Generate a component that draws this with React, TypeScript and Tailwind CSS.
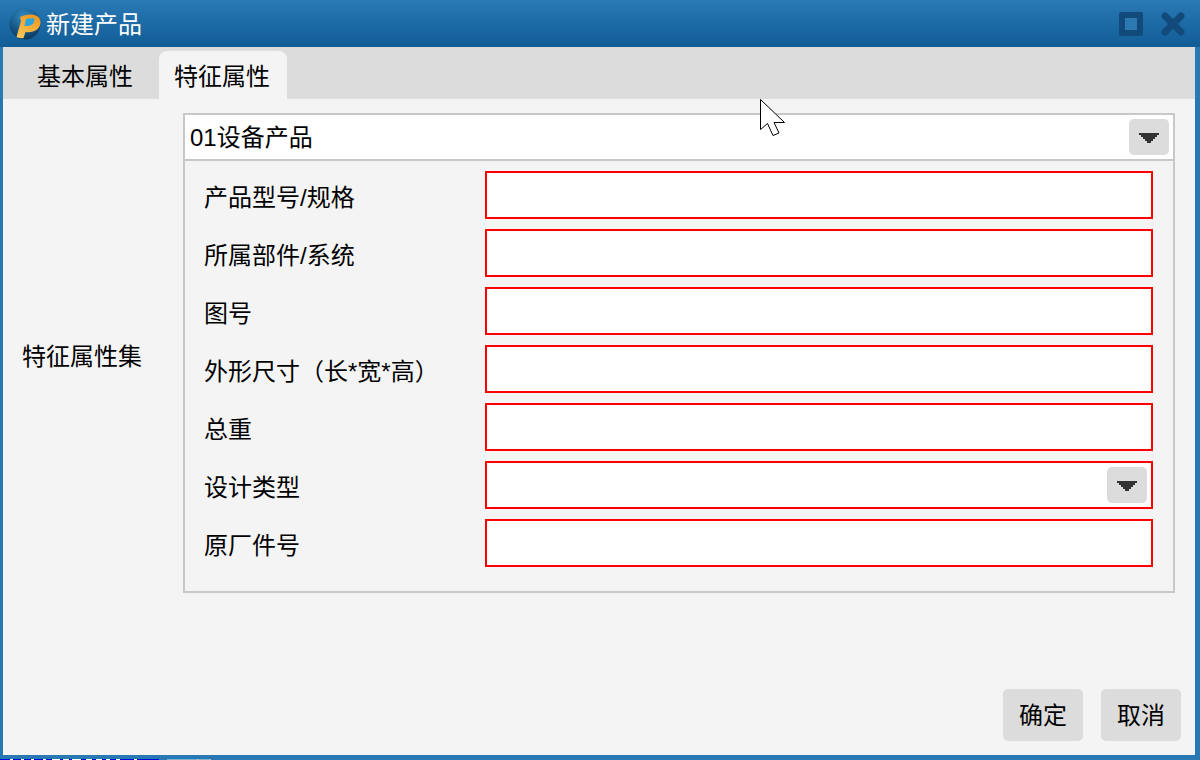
const cjk = "font-['Liberation_Sans','Noto_Sans_CJK_SC',sans-serif]";

const labels = ["产品型号/规格", "所属部件/系统", "图号", "外形尺寸（长*宽*高）", "总重", "设计类型", "原厂件号"];

const fragments: [number, string][] = [
  [10, "#0000e0"], [3, "#ffffff"], [8, "#0000e0"], [3, "#ffffff"], [7, "#0000e0"], [3, "#ffffff"], [9, "#0000e0"], [3, "#ffffff"],
  [6, "#0000e0"], [8, "#ffffff"], [3, "#0000e0"], [6, "#ffffff"], [3, "#0000e0"], [9, "#ffffff"], [5, "#0000e0"], [6, "#ffffff"],
  [4, "#0000e0"], [6, "#ffffff"], [4, "#0000e0"], [4, "#ffffff"], [6, "#0000e0"], [4, "#ffffff"], [14, "#0000e0"], [3, "#ffffff"],
  [22, "#0000e0"], [8, "#2878b4"], [30, "#7fb0d4"], [2, "#c0c0c0"], [10, "#7fb0d4"], [2, "#c0c0c0"],
];

function Arrow() {
  return (
    <svg className="mt-[2px]" width="20" height="10" viewBox="0 0 20 10" shapeRendering="crispEdges">
      <path d="M0 0H20V2H18V4H16V6H14V8H12V10H8V8H6V6H4V4H2V2H0Z" fill="#333333" />
    </svg>
  );
}

function ArrowButton() {
  return (
    <div className="flex h-9 w-10 items-center justify-center rounded-[5px] bg-[#dcdcdc]">
      <Arrow />
    </div>
  );
}

function Logo() {
  return (
    <svg width="32" height="32" viewBox="0 0 32 32">
      <defs>
        <radialGradient id="lg" cx="0.45" cy="0.25" r="0.85">
          <stop offset="0" stopColor="#2f8ac0" />
          <stop offset="0.55" stopColor="#17588a" />
          <stop offset="1" stopColor="#0c2f4e" />
        </radialGradient>
        <linearGradient id="pg" x1="0.3" y1="1" x2="0.7" y2="0">
          <stop offset="0" stopColor="#f7c757" />
          <stop offset="1" stopColor="#f0961e" />
        </linearGradient>
      </defs>
      <circle cx="16" cy="16" r="15.5" fill="url(#lg)" />
      <path d="M11 9C19 5 31 5 31.5 14C31.5 22 24 25 16.5 24L14.5 30C12 30.5 9.5 30 7.5 29L12 13Z" fill="url(#pg)" />
      <path d="M17 11L25 10C26.5 15 23 18.5 15.5 18Z" fill="#2aa5dc" />
    </svg>
  );
}

export default function App() {
  return (
    <div className={`${cjk} relative flex h-[760px] w-[1200px] flex-col overflow-hidden text-[24px] leading-none text-black`}>
      <div className="flex min-h-0 flex-1 flex-col border-b-[4px] border-l-[3px] border-r-[5px] border-b-[#2878b4] border-l-[#2878b4] border-r-[#2878b4] bg-[#f4f4f4]">
        <div className="-ml-[3px] -mr-[5px] flex h-[47px] shrink-0 items-center bg-gradient-to-b from-[#2a7ab5] to-[#0f5c96] pl-[9px] pr-[15px]">
          <Logo />
          <span className="ml-[5px] pt-[2px] text-[24px] text-white">新建产品</span>
          <div className="ml-auto flex items-center gap-[18px]">
            <div className="h-[24px] w-[24px] rounded-[2px] border-[6px] border-[#124a7b] bg-[#2c78b0]" />
            <svg width="24" height="24" viewBox="0 0 24 24">
              <path d="M4 4L20 20M20 4L4 20" stroke="#124a7b" strokeWidth="7" strokeLinecap="round" />
            </svg>
          </div>
        </div>

        <div className="flex h-[52px] shrink-0 items-end bg-[#dcdcdc]">
          <div className="ml-[18px] flex h-[48px] w-[128px] items-center justify-center pt-[4px]">基本属性</div>
          <div className="ml-[10px] flex h-[48px] w-[128px] items-center justify-center rounded-t-[8px] bg-[#f4f4f4] pr-[2px] pt-[4px]">特征属性</div>
        </div>

        <div className="flex min-h-0 flex-1 flex-col">
          <div className="flex flex-1 pt-[14px]">
            <div className="flex h-[480px] w-[180px] shrink-0 items-center self-start pl-[19px] pt-[8px]">
              <span>特征属性集</span>
            </div>
            <div className="mr-[20px] flex h-[480px] flex-1 flex-col border-2 border-[#c8c8c8]">
              <div className="flex h-[46px] shrink-0 items-center justify-between border-b-2 border-[#c8c8c8] bg-white pl-[5px] pr-[4px]">
                <span className="pt-[2px]">01设备产品</span>
                <ArrowButton />
              </div>
              <div className="flex flex-col gap-[10px] pl-[19px] pr-[20px] pt-[10px]">
                {labels.map((label, i) => (
                  <div key={label} className="flex h-[48px] items-center">
                    <span className="w-[281px] shrink-0 whitespace-nowrap pt-[5px]">{label}</span>
                    <div className="flex h-[48px] flex-1 items-center justify-end border-2 border-[#ff0000] bg-white pr-[4px]">
                      {i === 5 && <ArrowButton />}
                    </div>
                  </div>
                ))}
              </div>
            </div>
          </div>
          <div className="flex justify-end gap-[18px] pb-[14px] pr-[14px]">
            <button className="h-[52px] w-[80px] rounded-[5px] bg-[#dcdcdc] pt-[2px]">确定</button>
            <button className="h-[52px] w-[80px] rounded-[5px] bg-[#dcdcdc] pt-[2px]">取消</button>
          </div>
        </div>
      </div>

      <div className="flex h-px shrink-0 bg-[#2878b4]">
        {fragments.map(([w, c], i) => (
          <div key={i} className="h-px" style={{ width: w, backgroundColor: c }} />
        ))}
      </div>

      <svg className="absolute left-[760px] top-[99px]" width="26" height="38" viewBox="0 0 26 38">
        <path d="M0.5 0.5V30.5L7.5 24.5L13 36.5L19 34L14 23.5H24.5Z" fill="#ffffff" stroke="#000000" strokeWidth="1" />
      </svg>
    </div>
  );
}
